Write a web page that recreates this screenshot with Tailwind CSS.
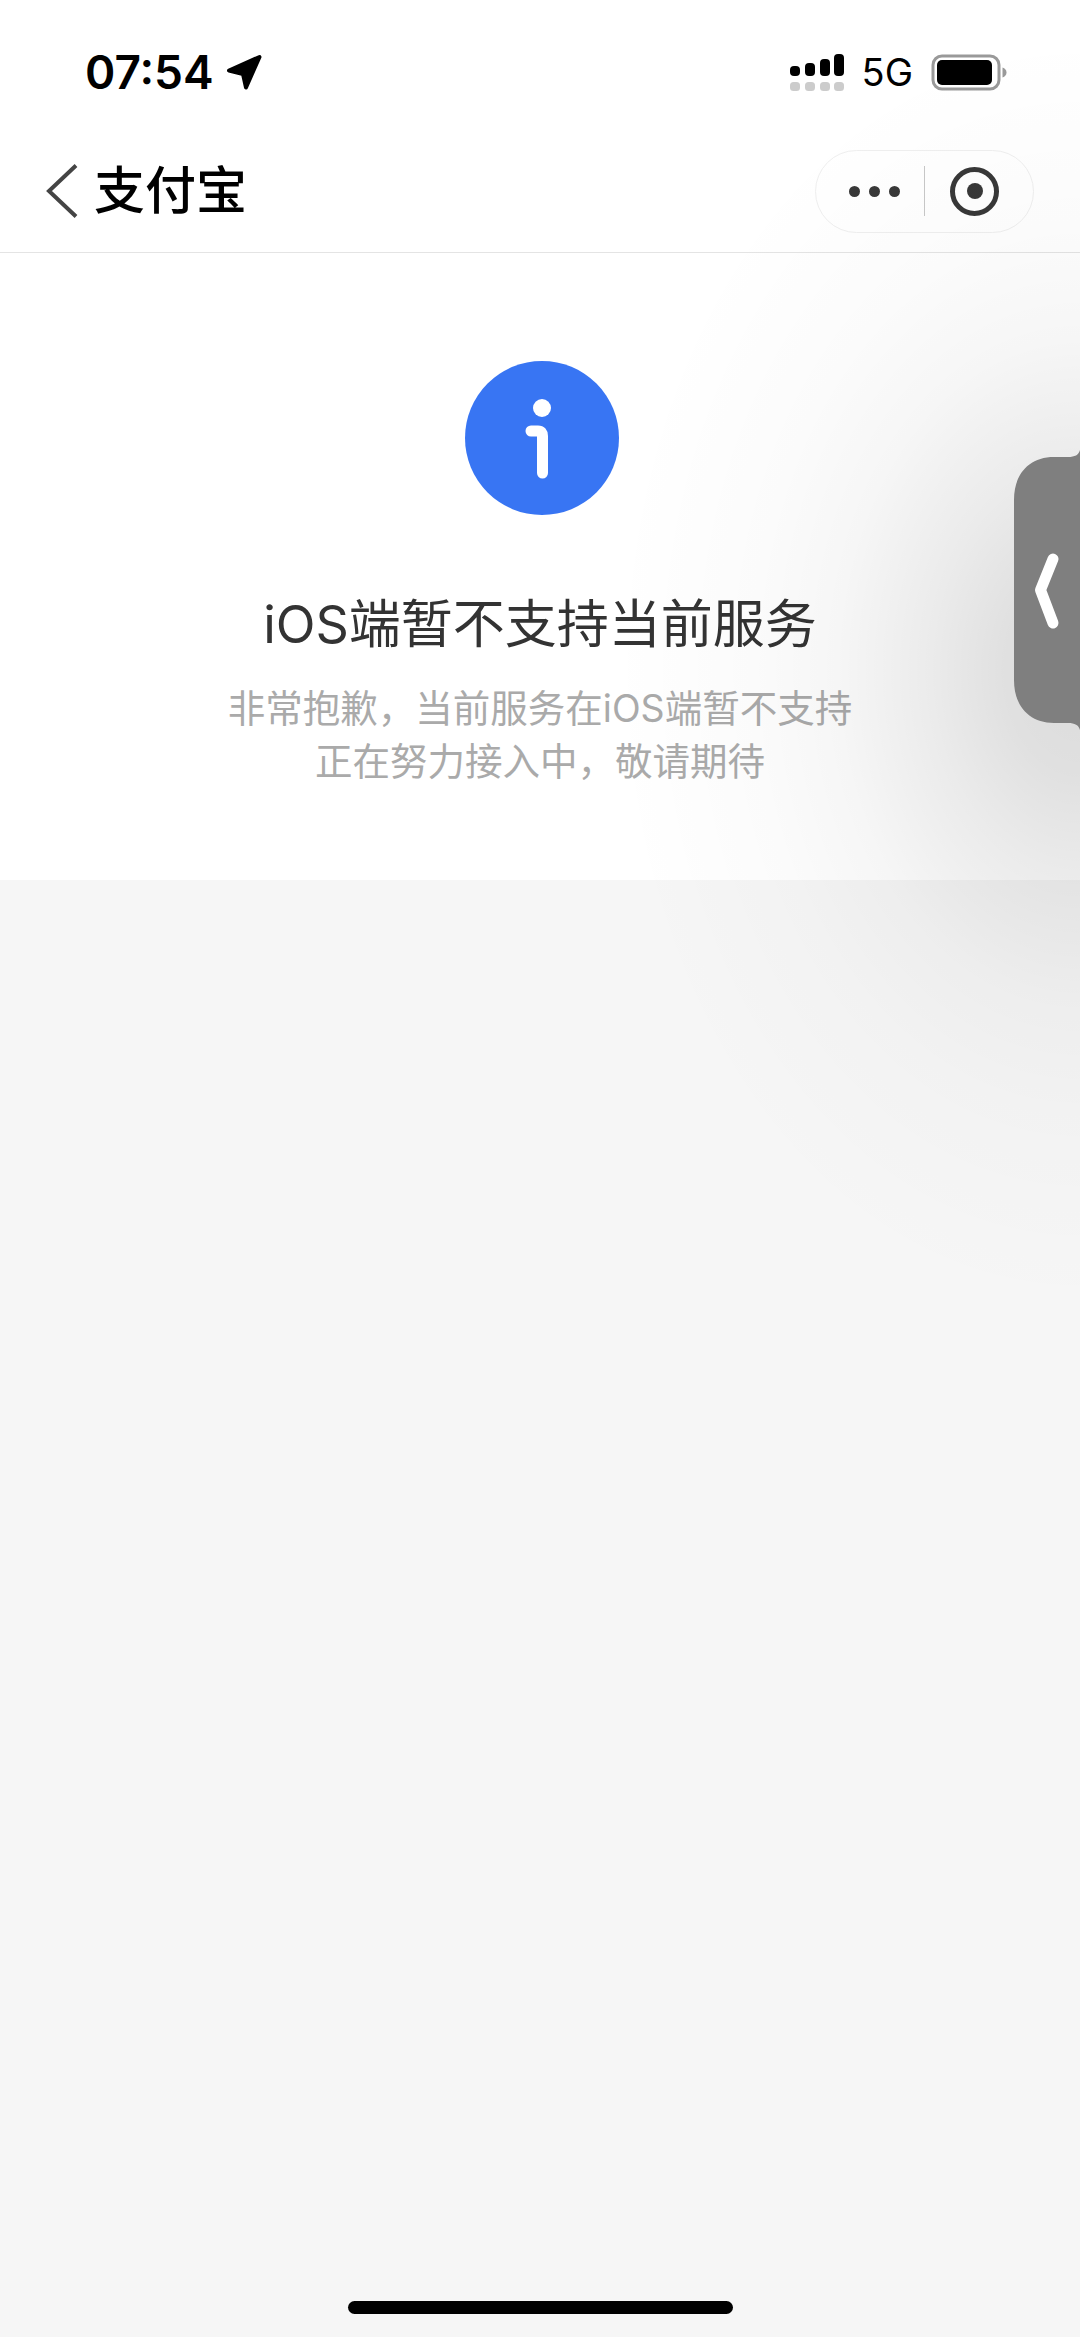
<!DOCTYPE html>
<html lang="zh-CN">
<head>
  <meta charset="UTF-8" />
  <meta name="viewport" content="width=device-width, initial-scale=1.0"/>
  <title>支付宝</title>
  <script src="https://cdn.jsdelivr.net/npm/@tailwindcss/browser@4"></script>
</head>
<body class="bg-[#f6f6f6] font-['Inter','Noto_Sans_CJK_SC',sans-serif]">
  <div class="relative w-[1080px] h-[2337px] overflow-hidden flex flex-col bg-[#f6f6f6]">

    <!-- Status bar -->
    <div class="h-[130px] pt-[14px] pl-[85px] pr-[73px] bg-white flex items-center justify-between text-black">
      <div class="flex items-center gap-[12px]">
        <span class="text-[46px] leading-none font-semibold">07:54</span>
        <svg class="w-[37px] h-[37px]" viewBox="0 0 37 37">
          <path d="M3 16.500L33.500 3L20 33.500L17 20Z" fill="#000" stroke="#000" stroke-width="4" stroke-linejoin="round"/>
        </svg>
      </div>
      <div class="flex items-center">
        <svg class="w-[54px] h-[38px]" viewBox="0 0 54 38">
          <rect x="0" y="13" width="10" height="10" rx="4" fill="#000"/>
          <rect x="15" y="10" width="10" height="13" rx="4" fill="#000"/>
          <rect x="30" y="6" width="10" height="17" rx="4" fill="#000"/>
          <rect x="44" y="1" width="10" height="22" rx="4" fill="#000"/>
          <rect x="0" y="29" width="10" height="9" rx="3.500" fill="#ccc"/>
          <rect x="15" y="29" width="10" height="9" rx="3.500" fill="#ccc"/>
          <rect x="30" y="29" width="10" height="9" rx="3.500" fill="#ccc"/>
          <rect x="44" y="29" width="10" height="9" rx="3.500" fill="#ccc"/>
        </svg>
        <span class="ml-[18px] text-[38px] leading-none font-normal">5G</span>
        <svg class="ml-[18px] w-[76px] h-[37px]" viewBox="0 0 76 37">
          <rect x="2" y="2" width="66" height="33" rx="9" fill="none" stroke="#999" stroke-width="3"/>
          <rect x="6" y="6" width="55" height="25" rx="5" fill="#000"/>
          <path d="M71.500 13.500C74 14.500 75.500 16 75.500 18.500C75.500 21 74 22.500 71.500 23.500Z" fill="#999"/>
        </svg>
      </div>
    </div>

    <!-- Nav bar -->
    <div class="h-[123px] pl-[46px] pr-[46px] bg-white border-b border-[#e4e4e4] flex items-center justify-between">
      <div class="flex items-center gap-[16px]">
        <svg class="w-[32px] h-[54px]" viewBox="0 0 32 54">
          <path d="M30 1.500L3 27L30 52.500" fill="none" stroke="#444" stroke-width="4"/>
        </svg>
        <span class="text-[51px] leading-[60px] font-medium text-black">支付宝</span>
      </div>
      <div class="w-[219px] h-[83px] rounded-full border border-[#efefef] flex items-center">
        <div class="w-[108px] pl-[33px] flex gap-[9px]">
          <span class="w-[11px] h-[11px] rounded-full bg-[#383838]"></span>
          <span class="w-[11px] h-[11px] rounded-full bg-[#383838]"></span>
          <span class="w-[11px] h-[11px] rounded-full bg-[#383838]"></span>
        </div>
        <div class="w-px h-[50px] bg-[#c8c8c8]"></div>
        <div class="ml-[25px] w-[49px] h-[49px] rounded-full border-[5px] border-[#383838] flex items-center justify-center">
          <span class="w-[16px] h-[16px] rounded-full bg-[#383838]"></span>
        </div>
      </div>
    </div>

    <!-- Notice -->
    <main class="h-[627px] pt-[108px] bg-white flex flex-col items-center">
      <svg class="ml-[4px] w-[154px] h-[154px]" viewBox="0 0 154 154">
        <circle cx="77" cy="77" r="77" fill="#3875f3"/>
        <circle cx="77" cy="47" r="9" fill="#fff"/>
        <path d="M66 70H73Q77.500 70 77.500 75V112" fill="none" stroke="#fff" stroke-width="11" stroke-linecap="round"/>
      </svg>
      <h1 class="mt-[76px] text-[52px] leading-[68px] font-normal text-[#333]">iOS端暂不支持当前服务</h1>
      <p class="mt-[23px] text-[37.500px] leading-[53px] text-[#aaa] text-center">非常抱歉，当前服务在iOS端暂不支持<br>正在努力接入中，敬请期待</p>
    </main>

    <!-- Home indicator -->
    <div class="mt-auto mb-[23px] mx-auto w-[385px] h-[13px] rounded-full bg-black"></div>

    <!-- Shadow behind the side handle -->
    <div class="absolute inset-0 pointer-events-none bg-[radial-gradient(ellipse_470px_640px_at_1080px_670px,rgba(0,0,0,0.14)_0%,rgba(0,0,0,0.12)_16%,rgba(0,0,0,0.08)_32%,rgba(0,0,0,0.035)_52%,rgba(0,0,0,0.016)_70%,rgba(0,0,0,0)_100%)]"></div>

    <!-- Side handle -->
    <svg class="absolute top-[450px] right-0 w-[66px] h-[280px]" viewBox="0 0 66 280">
      <path d="M66 0C64.500 5 61 7 54 7H40C15 7 0 24 0 50V230C0 256 15 273 40 273H54C61 273 64.500 275 66 280Z" fill="#7f7f7f"/>
      <path d="M39 109L26.500 140L39 173" fill="none" stroke="#fff" stroke-width="11" stroke-linecap="round" stroke-linejoin="round"/>
    </svg>
  </div>
</body>
</html>
